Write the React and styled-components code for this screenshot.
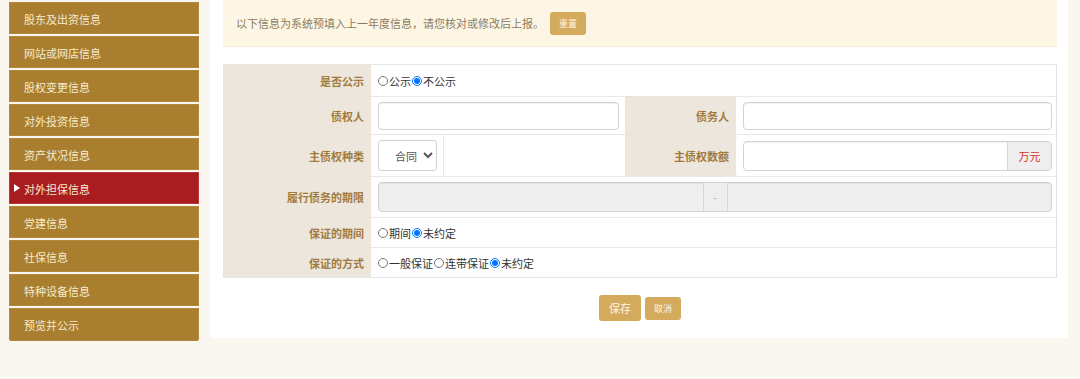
import styled, { createGlobalStyle } from "styled-components";

const GlobalStyle = createGlobalStyle`
  body {
    margin: 0;
    background: #f9f7ef;
    font-family: "Noto Sans CJK SC", "Noto Sans", sans-serif;
  }
`;

const Page = styled.div`
  display: flex;
  align-items: flex-start;
  gap: 11px;
  padding: 2px 0 0 9px;
  width: 1080px;
  box-sizing: border-box;
`;

const SideNav = styled.ul`
  list-style: none;
  margin: 0;
  padding: 0;
  width: 190px;
  display: flex;
  flex-direction: column;
  gap: 2px;
`;

const NavItem = styled.li`
  position: relative;
  height: 32px;
  display: flex;
  align-items: center;
  padding: 1px 0 0 15px;
  box-sizing: border-box;
  font-size: 11px;
  color: #f6ead0;
  background: ${(p) => (p.$active ? "#a91c1f" : "#a97f2f")};
  box-shadow: inset 0 0 0 1px ${(p) => (p.$active ? "#b9393a" : "#b38a3c")};

  &:last-child {
    height: 33px;
    border-radius: 0 0 3px 3px;
  }

  ${(p) =>
    p.$active &&
    `
    &::before {
      content: "";
      position: absolute;
      left: 5px;
      top: 12px;
      border-style: solid;
      border-width: 4px 0 4px 6px;
      border-color: transparent transparent transparent #fff;
    }
  `}
`;

const Panel = styled.div`
  width: 858px;
  margin-top: -2px;
  background: #fff;
  padding: 0 11px 17px 13px;
  box-sizing: border-box;
`;

const Notice = styled.div`
  height: 47px;
  display: flex;
  align-items: center;
  gap: 6px;
  padding-left: 13px;
  background: #fdf6e4;
  border-bottom: 1px solid #f3ead3;
  box-sizing: border-box;
  font-size: 11px;
  color: #8c7b5f;
`;

const SmallButton = styled.button`
  height: ${(p) => (p.$big ? "26px" : "23px")};
  padding: 0 ${(p) => (p.$big ? "10px" : "9px")};
  border: none;
  border-radius: 3px;
  background: #d4aa5d;
  color: #fff5e2;
  font-family: inherit;
  font-size: ${(p) => (p.$big ? "11px" : "9px")};
  cursor: pointer;
`;

const FormGrid = styled.div`
  margin-top: 17px;
  display: grid;
  grid-template-columns: 147px 73px 181px 111px 322px;
  border: 1px solid #e6e6e6;
  border-right-color: #e0e0e0;
`;

const Label = styled.div`
  height: ${(p) => p.$h}px;
  display: flex;
  align-items: center;
  justify-content: flex-end;
  padding-right: 7px;
  background: #ece6dd;
  font-size: 11px;
  font-weight: bold;
  color: #a27b3b;
  border-top: ${(p) => (p.$first ? "none" : "1px solid #e9e3d9")};
  box-sizing: border-box;
`;

const Cell = styled.div`
  grid-column: ${(p) => p.$span || "auto"};
  height: ${(p) => p.$h}px;
  display: flex;
  align-items: center;
  padding: 0 6px 0 7px;
  border-top: ${(p) => (p.$first ? "none" : "1px solid #e8e8e8")};
  border-right: ${(p) => (p.$divider ? "1px solid #e8e8e8" : "none")};
  box-sizing: border-box;
  font-size: 11px;
  color: #333;
`;

const TextInput = styled.input`
  flex: 1;
  min-width: 0;
  height: 28px;
  border: 1px solid #d2d2d2;
  border-radius: 4px;
  box-shadow: inset 0 1px 1px rgba(0, 0, 0, 0.06);
  padding: 0 8px;
  box-sizing: border-box;
  background: #fff;
  font-family: inherit;
  font-size: 11px;
  outline: none;
`;

const Select = styled.select`
  width: 59px;
  height: 31px;
  border: 1px solid #d2d2d2;
  border-radius: 3px;
  background: #fff;
  padding-left: 12px;
  font-family: inherit;
  font-size: 11px;
  color: #555;
`;

const Group = styled.div`
  flex: 1;
  display: flex;
  height: 28px;
  border: 1px solid #d2d2d2;
  border-radius: 4px;
  overflow: hidden;
  box-shadow: inset 0 1px 1px rgba(0, 0, 0, 0.06);
  background: ${(p) => (p.$disabled ? "#efefef" : "#fff")};
`;

const GroupField = styled.div`
  flex: 1;
`;

const Addon = styled.div`
  width: ${(p) => p.$w}px;
  display: flex;
  align-items: center;
  justify-content: center;
  background: #eee;
  border-left: 1px solid #d6d6d6;
  border-right: ${(p) => (p.$mid ? "1px solid #d6d6d6" : "none")};
  font-size: ${(p) => (p.$mid ? "9px" : "11px")};
  color: ${(p) => (p.$red ? "#d8322b" : "#999")};
`;

const RadioLabel = styled.label`
  display: inline-flex;
  align-items: center;
  margin-right: 1px;
  font-size: 11px;
  color: #333;

  input {
    width: 10px;
    height: 10px;
    margin: 0 1px 0 0;
  }
`;

const Actions = styled.div`
  display: flex;
  justify-content: center;
  align-items: center;
  gap: 4px;
  margin-top: 17px;
`;

const navItems = [
  "股东及出资信息",
  "网站或网店信息",
  "股权变更信息",
  "对外投资信息",
  "资产状况信息",
  "对外担保信息",
  "党建信息",
  "社保信息",
  "特种设备信息",
  "预览并公示",
];

function Radios({ name, options, checked }) {
  return options.map((o) => (
    <RadioLabel key={o}>
      <input type="radio" name={name} defaultChecked={o === checked} />
      {o}
    </RadioLabel>
  ));
}

export default function App() {
  return (
    <>
      <GlobalStyle />
      <Page>
        <SideNav>
          {navItems.map((t) => (
            <NavItem key={t} $active={t === "对外担保信息"}>
              {t}
            </NavItem>
          ))}
        </SideNav>
        <Panel>
          <Notice>
            以下信息为系统预填入上一年度信息，请您核对或修改后上报。
            <SmallButton>重置</SmallButton>
          </Notice>

          <FormGrid>
            <Label $h={31} $first>是否公示</Label>
            <Cell $h={31} $span="2 / 6" $first>
              <Radios name="gs" options={["公示", "不公示"]} checked="不公示" />
            </Cell>

            <Label $h={38}>债权人</Label>
            <Cell $h={38} $span="span 2">
              <TextInput />
            </Cell>
            <Label $h={38}>债务人</Label>
            <Cell $h={38}>
              <TextInput />
            </Cell>

            <Label $h={42}>主债权种类</Label>
            <Cell $h={42} $divider>
              <Select defaultValue="合同">
                <option>合同</option>
              </Select>
            </Cell>
            <Cell $h={42} />
            <Label $h={42}>主债权数额</Label>
            <Cell $h={42}>
              <Group>
                <GroupField />
                <Addon $w={43} $red>万元</Addon>
              </Group>
            </Cell>

            <Label $h={41}>履行债务的期限</Label>
            <Cell $h={41} $span="2 / 6">
              <Group $disabled>
                <GroupField />
                <Addon $w={23} $mid>-</Addon>
                <GroupField />
              </Group>
            </Cell>

            <Label $h={30}>保证的期间</Label>
            <Cell $h={30} $span="2 / 6">
              <Radios name="qj" options={["期间", "未约定"]} checked="未约定" />
            </Cell>

            <Label $h={30}>保证的方式</Label>
            <Cell $h={30} $span="2 / 6">
              <Radios
                name="fs"
                options={["一般保证", "连带保证", "未约定"]}
                checked="未约定"
              />
            </Cell>
          </FormGrid>

          <Actions>
            <SmallButton $big>保存</SmallButton>
            <SmallButton>取消</SmallButton>
          </Actions>
        </Panel>
      </Page>
    </>
  );
}
